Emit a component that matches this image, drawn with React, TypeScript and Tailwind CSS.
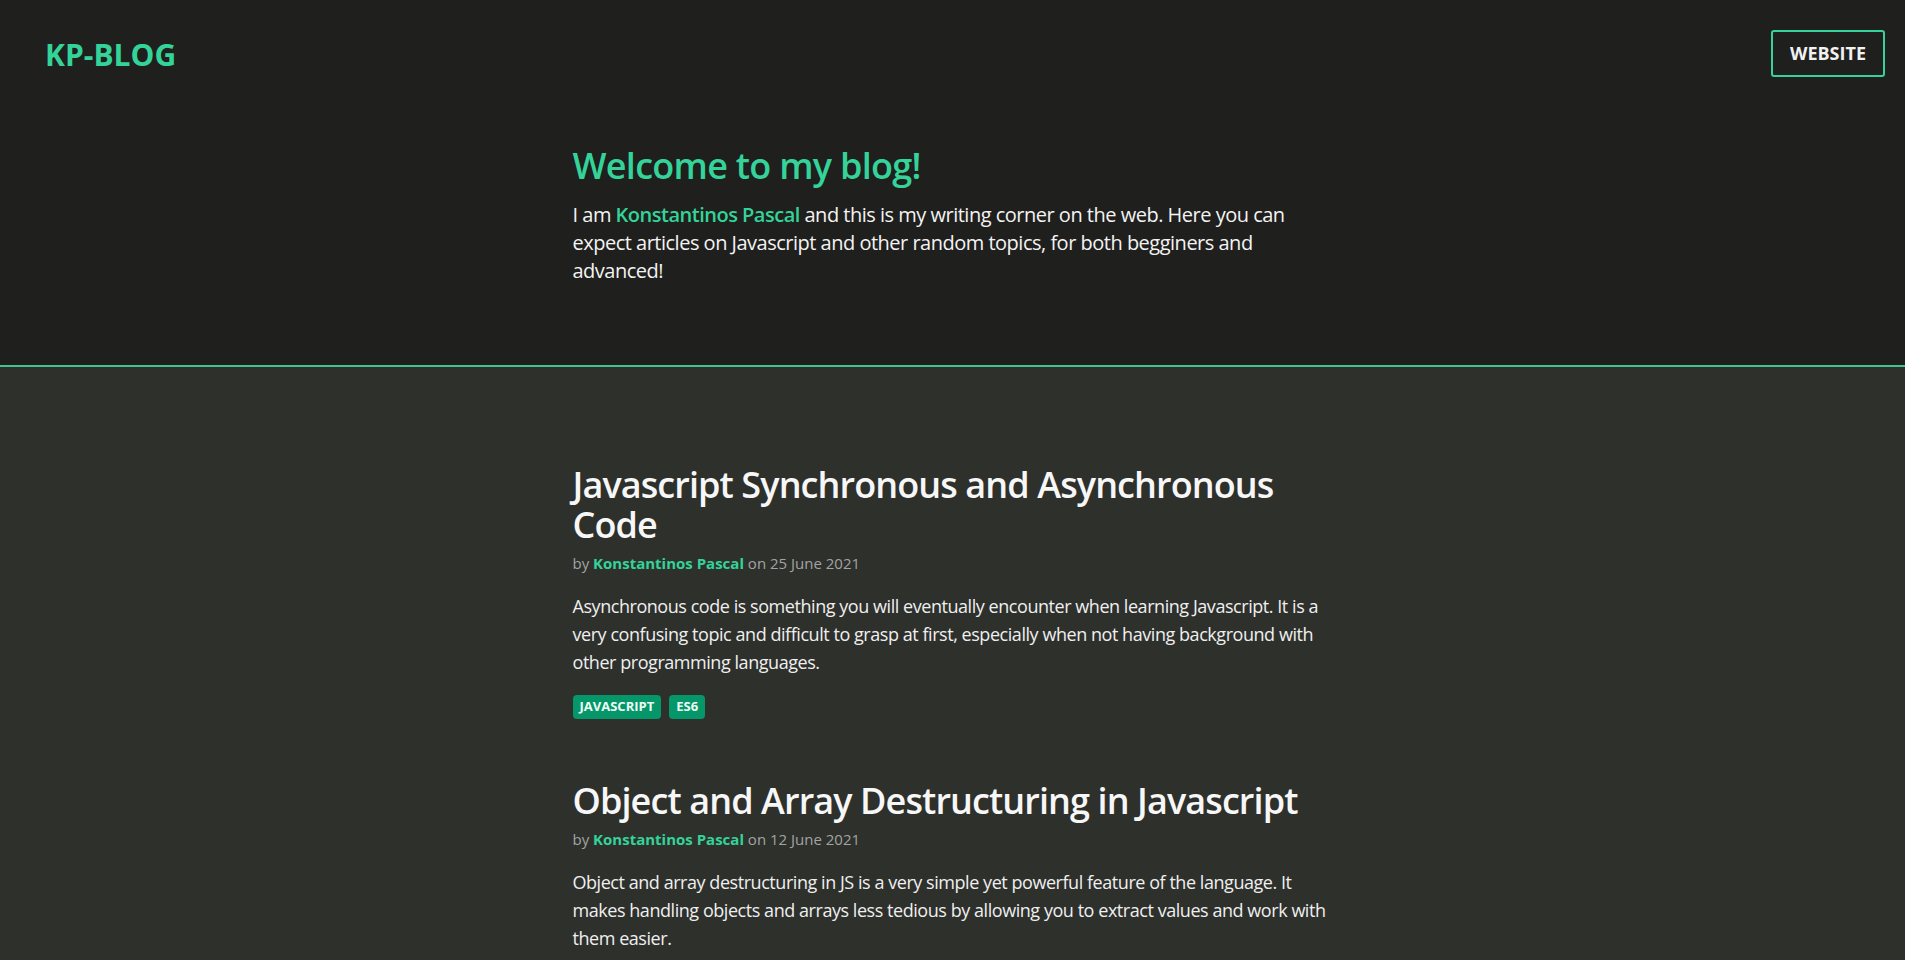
import React from 'react';

type Post = {
  title: string;
  date: string;
  excerpt: string;
  tags: string[];
};

const posts: Post[] = [
  {
    title: 'Javascript Synchronous and Asynchronous Code',
    date: '25 June 2021',
    excerpt:
      'Asynchronous code is something you will eventually encounter when learning Javascript. It is a very confusing topic and difficult to grasp at first, especially when not having background with other programming languages.',
    tags: ['JAVASCRIPT', 'ES6'],
  },
  {
    title: 'Object and Array Destructuring in Javascript',
    date: '12 June 2021',
    excerpt:
      'Object and array destructuring in JS is a very simple yet powerful feature of the language. It makes handling objects and arrays less tedious by allowing you to extract values and work with them easier.',
    tags: ['JAVASCRIPT', 'ES6'],
  },
];

const PostCard: React.FC<{ post: Post }> = ({ post }) => (
  <article className="mb-[62px]">
    <h2 className="text-[36px] leading-10 font-semibold tracking-[-0.025em] text-[#f7f7f7]">{post.title}</h2>
    <p className="mt-[6px] text-[15px] leading-6 text-[#a3a3a3]">
      by <span className="font-bold text-[#34d399]">Konstantinos Pascal</span> on {post.date}
    </p>
    <p className="mt-[17px] text-[18px] leading-7 tracking-[-0.025em] text-[#efefef]">{post.excerpt}</p>
    <div className="mt-[19px] flex gap-2">
      {post.tags.map((tag) => (
        <span
          key={tag}
          className="flex h-6 items-center rounded px-[7px] text-[13px] font-bold text-[#ecfdf5] bg-[#059669]"
        >
          {tag}
        </span>
      ))}
    </div>
  </article>
);

const App: React.FC = () => {
  return (
    <div className="min-h-screen bg-[#2e302c] font-['Open_Sans',sans-serif]">
      {/* top bar + intro */}
      <header className="bg-[#1f1f1d] border-b-2 border-[#3fc48f]">
        <nav className="flex items-center justify-between pl-[45px] pr-5 pt-[30px]">
          <a href="#" className="mt-[2px] text-[30px] font-bold leading-none text-[#34d399]">
            KP-BLOG
          </a>
          <a
            href="#"
            className="flex h-[47px] items-center rounded-[3px] border-2 border-[#34d399] px-[17px] text-[18px] font-bold text-[#f1f1f1]"
          >
            WEBSITE
          </a>
        </nav>
        <div className="mx-auto max-w-[760px] pt-[69px] pb-20">
          <h1 className="text-4xl font-semibold tracking-[-0.02em] text-[#34d399]">Welcome to my blog!</h1>
          <p className="mt-[15px] text-xl leading-7 tracking-[-0.025em] text-[#f3f3f3]">
            I am <span className="font-semibold text-[#34d399]">Konstantinos Pascal</span> and this is my writing
            corner on the web. Here you can expect articles on Javascript and other random topics, for both
            begginers and advanced!
          </p>
        </div>
      </header>

      {/* post list */}
      <main className="mx-auto max-w-[760px] pt-[98px] pb-20">
        {posts.map((post) => (
          <PostCard key={post.title} post={post} />
        ))}
      </main>
    </div>
  );
};

export default App;
